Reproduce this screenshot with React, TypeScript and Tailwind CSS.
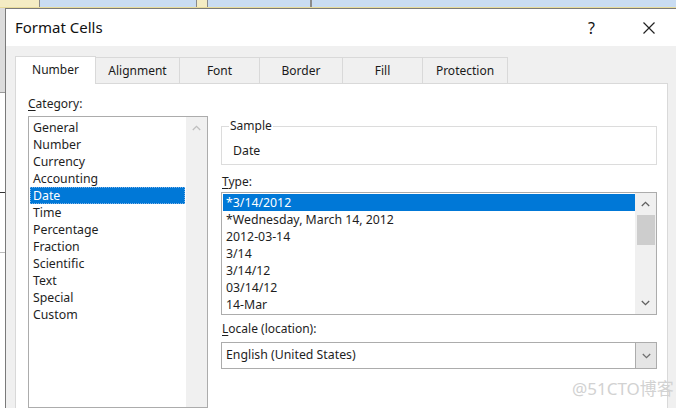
import React from "react";

const CATEGORIES = ["General", "Number", "Currency", "Accounting", "Date", "Time", "Percentage", "Fraction", "Scientific", "Text", "Special", "Custom"];
const TYPES = ["*3/14/2012", "*Wednesday, March 14, 2012", "2012-03-14", "3/14", "3/14/12", "03/14/12", "14-Mar"];
const TABS = [
  { label: "Number", w: "w-[81px]" },
  { label: "Alignment", w: "w-[85px]" },
  { label: "Font", w: "w-[81px]" },
  { label: "Border", w: "w-[84px]" },
  { label: "Fill", w: "w-[81px]" },
  { label: "Protection", w: "w-[86px]" },
];

function Chevron({ up, color }: { up?: boolean; color: string }) {
  return (
    <svg width="9" height="6" viewBox="0 0 9 6" fill="none">
      <path d={up ? "M0.8 5 L4.5 1.3 L8.2 5" : "M0.8 1 L4.5 4.7 L8.2 1"} stroke={color} strokeWidth="1.3" />
    </svg>
  );
}

function Label({ first, rest }: { first: string; rest: string }) {
  return (
    <div className="h-[16px] leading-[16px] text-[12px] text-[#1e1e1e]">
      <span className="underline underline-offset-2">{first}</span>
      {rest}
    </div>
  );
}

export default function App() {
  return (
    <div className="relative w-[676px] h-[408px] overflow-hidden flex flex-col bg-[#f0f0f0] font-['Segoe_UI','Noto_Sans',sans-serif]">
      {/* excel behind */}
      <div className="h-[8px] flex shrink-0 bg-[#c9dcf2] border-b border-[#e8dc9c]">
        <div className="w-[40px] bg-[#f4ecc4] border-r border-[#8a8a8a]" />
        <div className="w-[156px]" />
        <div className="w-[12px] bg-[#f4ecc4] border-x border-[#8a8a8a]" />
        <div className="w-[102px]" />
        <div className="w-[2px] bg-[#8a8a8a]" />
      </div>
      <div className="flex-1 flex min-h-0">
        <div className="w-[5px] flex flex-col bg-white">
          <div className="h-[85px] bg-[#dcdcdc] border-b border-[#9a9a9a]" />
          <div className="h-[100px] border-b border-[#333]" />
          <div className="h-[60px] border-b border-[#bbb]" />
          <div className="flex-1" />
        </div>
        <div className="flex-1 flex flex-col border-l border-t border-[#7a7a7a] min-w-0">
          {/* title bar */}
          <div className="h-[37px] shrink-0 bg-white flex items-center pl-[9px] text-[#111]">
            <div className="text-[15px] leading-none">Format Cells</div>
            <div className="flex-1" />
            <div className="text-[16px] leading-none mr-[48px]">?</div>
            <svg width="12" height="12" viewBox="0 0 12 12" className="mr-[21px]">
              <path d="M0.5 0.5 L11.5 11.5 M11.5 0.5 L0.5 11.5" stroke="#222" strokeWidth="1.2" />
            </svg>
          </div>
          {/* body */}
          <div className="flex-1 flex flex-col pl-[9px] pr-[8px] pt-[9px] min-h-0">
            <div className="flex items-end h-[28px] shrink-0">
              {TABS.map((t, i) =>
                i === 0 ? (
                  <div key={t.label} className={`${t.w} h-[28px] bg-white border border-b-0 border-[#d9d9d9] flex items-center justify-center text-[12px] text-[#1a1a1a] relative z-10 -mb-px pb-[1px]`}>
                    {t.label}
                  </div>
                ) : (
                  <div key={t.label} className={`${t.w} h-[26px] -ml-px border border-b-0 border-[#d9d9d9] flex items-center justify-center text-[12px] text-[#1a1a1a]`}>
                    {t.label}
                  </div>
                )
              )}
            </div>
            <div className="flex-1 bg-white border border-b-0 border-[#d9d9d9] flex pl-[12px] min-h-0">
              {/* category column */}
              <div className="w-[180px] flex flex-col pt-[12px]">
                <Label first="C" rest="ategory:" />
                <div className="mt-[4px] flex-1 border border-[#acacac] flex">
                  <div className="flex-1 pt-[2px] pl-[1px] pr-[1px]">
                    {CATEGORIES.map((c) => (
                      <div
                        key={c}
                        className={`h-[17px] leading-[17px] text-[12.3px] pl-[3px] ${c === "Date" ? "bg-[#0078d7] text-white outline-1 outline-dotted outline-[#7fb3e6] -outline-offset-1" : "text-[#1e1e1e]"}`}
                      >
                        {c}
                      </div>
                    ))}
                  </div>
                  <div className="w-[21px] bg-[#f0f0f0] flex flex-col items-center pt-[8px]">
                    <Chevron up color="#bfbfbf" />
                  </div>
                </div>
              </div>
              {/* right column */}
              <div className="w-[436px] ml-[13px] flex flex-col pt-[34px]">
                <fieldset className="border border-[#dcdcdc] pl-[7px] pr-[8px] pb-[4px] h-[47px]">
                  <legend className="px-[1px] text-[12px] leading-[16px] text-[#1e1e1e]">Sample</legend>
                  <div className="pl-[4px] mt-[9px] text-[12.3px] leading-[16px] text-[#1e1e1e]">Date</div>
                </fieldset>
                <div className="mt-[9px] pl-[1px]">
                  <Label first="T" rest="ype:" />
                </div>
                <div className="mt-[2px] h-[123px] border border-[#acacac] flex">
                  <div className="flex-1 pt-[1px] pl-[1px]">
                    {TYPES.map((t, i) => (
                      <div
                        key={t}
                        className={`h-[17px] leading-[17px] text-[12.3px] pl-[3px] ${i === 0 ? "bg-[#0078d7] text-white" : "text-[#1e1e1e]"}`}
                      >
                        {t}
                      </div>
                    ))}
                  </div>
                  <div className="w-[21px] bg-[#f0f0f0] flex flex-col items-center">
                    <div className="h-[22px] flex items-center">
                      <Chevron up color="#606060" />
                    </div>
                    <div className="w-[18px] h-[30px] bg-[#cdcdcd]" />
                    <div className="flex-1" />
                    <div className="h-[22px] flex items-center">
                      <Chevron color="#606060" />
                    </div>
                  </div>
                </div>
                <div className="mt-[6px] pl-[1px]">
                  <Label first="L" rest="ocale (location):" />
                </div>
                <div className="mt-[5px] h-[27px] border border-[#acacac] flex">
                  <div className="flex-1 pl-[4px] flex items-center text-[12.3px] text-[#1e1e1e]">English (United States)</div>
                  <div className="w-[21px] bg-[#e5e5e5] border-l border-[#acacac] flex items-center justify-center">
                    <Chevron color="#707070" />
                  </div>
                </div>
              </div>
            </div>
          </div>
        </div>
      </div>
      <div className="absolute left-[572px] top-[379px] text-[17px] leading-[20px] text-[#d2d2d2] whitespace-nowrap font-['Noto_Sans','Noto_Sans_CJK_SC',sans-serif]">
        @51CTO博客
      </div>
    </div>
  );
}
